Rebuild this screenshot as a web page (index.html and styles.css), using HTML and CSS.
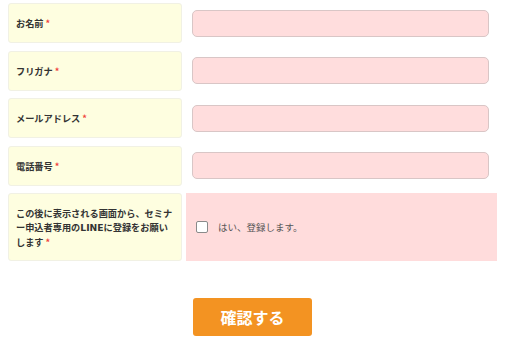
FILE: index.html
```
<!DOCTYPE html>
<html lang="ja">
<head>
    <meta charset="UTF-8">
    <meta name="viewport" content="width=device-width, initial-scale=1.0">
    <title>セミナー申込フォーム</title>
    <link rel="stylesheet" href="styles.css">
</head>
<body>

    <form class="entry-form">
        <div class="form-table">
            <div class="label-cell"><span>お名前<span class="req">*</span></span></div>
            <div class="field-cell"><input type="text" class="text-input"></div>

            <div class="label-cell"><span>フリガナ<span class="req">*</span></span></div>
            <div class="field-cell"><input type="text" class="text-input"></div>

            <div class="label-cell"><span>メールアドレス<span class="req">*</span></span></div>
            <div class="field-cell"><input type="email" class="text-input"></div>

            <div class="label-cell"><span>電話番号<span class="req">*</span></span></div>
            <div class="field-cell"><input type="tel" class="text-input"></div>

            <div class="label-cell tall"><span>この後に表示される画面から、セミナー申込者専用の<span class="latin">LINE</span>に登録をお願いします<span class="req">*</span></span></div>
            <div class="field-cell check-cell">
                <label class="check-label"><span class="check-box"></span>はい、登録します。</label>
            </div>
        </div>

        <div class="submit-row">
            <button type="button" class="submit-btn">確認する</button>
        </div>
    </form>

</body>
</html>
```

FILE: styles.css
```
body {
    margin: 0;
    padding: 3px 8px 0;
    font-family: "Noto Sans CJK JP", "Noto Sans", sans-serif;
    color: #333;
    background: #fff;
}
.entry-form {
    width: 489px;
}
.form-table {
    display: grid;
    grid-template-columns: 174px 311px;
    column-gap: 4px;
    row-gap: 7.5px;
}
.label-cell {
    box-sizing: border-box;
    height: 40px;
    padding: 0 5px 0 7px;
    display: flex;
    align-items: center;
    background: #fefee0;
    border: 1px solid #f1f1e4;
    border-radius: 3px;
    font-size: 9.2px;
    font-weight: bold;
    line-height: 14px;
}
.label-cell.tall {
    height: 68px;
}
.latin {
    font-family: "DejaVu Sans", sans-serif;
}
.req {
    color: #f0433a;
    margin-left: 2px;
}
.field-cell {
    display: flex;
    align-items: center;
    padding: 0 8px 0 6px;
}
.text-input {
    box-sizing: border-box;
    width: 100%;
    height: 27px;
    margin: 0;
    background: #ffdddd;
    border: 1px solid #d9c6c6;
    border-radius: 5px;
}
.check-cell {
    background: #ffdcdc;
    padding-left: 10px;
}
.check-label {
    display: flex;
    align-items: center;
    font-size: 9.5px;
    color: #555;
}
.check-box {
    box-sizing: border-box;
    width: 12px;
    height: 12px;
    margin-right: 10px;
    background: #fff;
    border: 1px solid #8a8a8a;
    border-radius: 2px;
}
.submit-row {
    display: flex;
    justify-content: center;
    padding-top: 37px;
}
.submit-btn {
    width: 119px;
    height: 38px;
    background: #f39322;
    color: #fff;
    border: none;
    border-radius: 3px;
    font-family: "Noto Sans CJK JP", sans-serif;
    font-size: 16px;
    font-weight: bold;
    padding: 0;
}
```
